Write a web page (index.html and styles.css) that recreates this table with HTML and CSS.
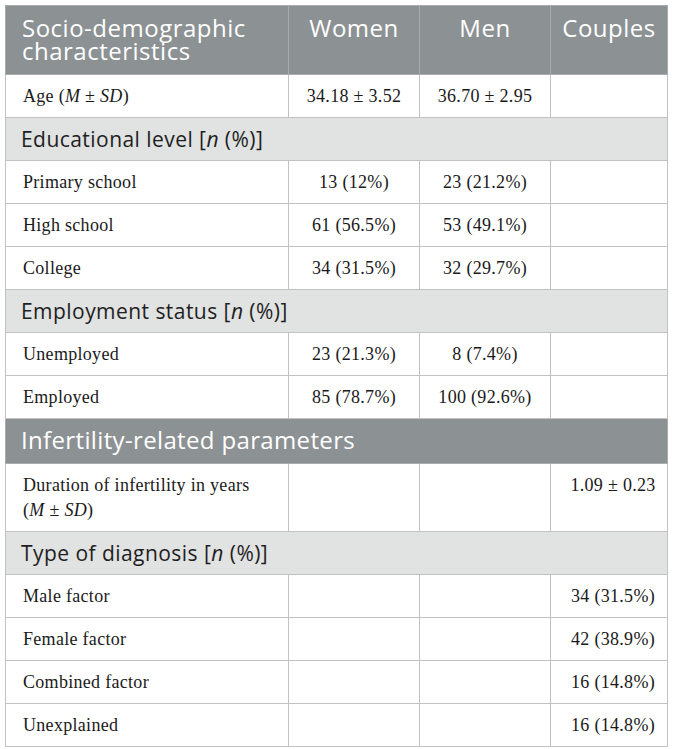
FILE: index.html
```html
<!DOCTYPE html>
<html>
<head>
<meta charset="utf-8">
<link rel="stylesheet" href="styles.css">
</head>
<body>
<div class="wrap">
<table class="tbl">
  <colgroup>
    <col class="c1"><col class="c2"><col class="c3"><col class="c4">
  </colgroup>
  <thead>
    <tr class="head">
      <th class="lab">Socio-demographic characteristics</th>
      <th>Women</th>
      <th>Men</th>
      <th>Couples</th>
    </tr>
  </thead>
  <tbody>
    <tr class="row">
      <td class="lab">Age (<i>M</i> ± <i>SD</i>)</td>
      <td>34.18 ± 3.52</td>
      <td>36.70 ± 2.95</td>
      <td></td>
    </tr>
    <tr class="sec"><td colspan="4">Educational level [<i>n</i> (%)]</td></tr>
    <tr class="row"><td class="lab">Primary school</td><td>13 (12%)</td><td>23 (21.2%)</td><td></td></tr>
    <tr class="row"><td class="lab">High school</td><td>61 (56.5%)</td><td>53 (49.1%)</td><td></td></tr>
    <tr class="row"><td class="lab">College</td><td>34 (31.5%)</td><td>32 (29.7%)</td><td></td></tr>
    <tr class="sec"><td colspan="4">Employment status [<i>n</i> (%)]</td></tr>
    <tr class="row"><td class="lab">Unemployed</td><td>23 (21.3%)</td><td>8 (7.4%)</td><td></td></tr>
    <tr class="row"><td class="lab">Employed</td><td>85 (78.7%)</td><td>100 (92.6%)</td><td></td></tr>
    <tr class="dark"><td colspan="4">Infertility-related parameters</td></tr>
    <tr class="row top">
      <td class="lab">Duration of infertility in years<br>(<i>M</i> ± <i>SD</i>)</td>
      <td></td><td></td>
      <td class="cp">1.09 ± 0.23</td>
    </tr>
    <tr class="sec"><td colspan="4">Type of diagnosis [<i>n</i> (%)]</td></tr>
    <tr class="row"><td class="lab">Male factor</td><td></td><td></td><td class="cp">34 (31.5%)</td></tr>
    <tr class="row"><td class="lab">Female factor</td><td></td><td></td><td class="cp">42 (38.9%)</td></tr>
    <tr class="row"><td class="lab">Combined factor</td><td></td><td></td><td class="cp">16 (14.8%)</td></tr>
    <tr class="row"><td class="lab">Unexplained</td><td></td><td></td><td class="cp">16 (14.8%)</td></tr>
  </tbody>
</table>
</div>
</body>
</html>
```

FILE: styles.css
```css
html, body {
  margin: 0;
  padding: 0;
  background: #ffffff;
}
.wrap {
  padding: 5px 0 0 5px;
}
.tbl {
  border-collapse: collapse;
  table-layout: fixed;
  width: 662px;
  border: 1px solid #bcbcbc;
}
.c1 { width: 283px; }
.c2 { width: 131px; }
.c3 { width: 131px; }
.c4 { width: 117px; }

.tbl th, .tbl td {
  border: 1px solid #c2c2c2;
}

.head th {
  background: #8c9193;
  color: #ffffff;
  font-family: "Open Sans", sans-serif;
  font-weight: 400;
  font-size: 24px;
  letter-spacing: 0.5px;
  line-height: 23px;
  padding: 10px 4px 12px 4px;
  text-align: center;
  vertical-align: top;
  border-color: #a9acae;
}
.head th.lab {
  text-align: left;
  padding-left: 16px;
}

.row td {
  font-family: "Liberation Serif", serif;
  font-size: 18px;
  letter-spacing: 0.3px;
  line-height: 25px;
  color: #1a1a1a;
  padding: 9px 4px 8px 4px;
  text-align: center;
  vertical-align: middle;
}
.row td.lab {
  text-align: left;
  padding-left: 17px;
}
.row.top td {
  vertical-align: top;
}
.row td.cp {
  padding-left: 12px;
}

.sec td {
  background: #e1e2e2;
  font-family: "Open Sans", sans-serif;
  font-size: 21px;
  letter-spacing: 0.45px;
  line-height: 26px;
  color: #1e1e1e;
  padding: 8px 8px 8px 15px;
}
.dark td {
  background: #8c9193;
  color: #ffffff;
  font-family: "Open Sans", sans-serif;
  font-size: 24px;
  letter-spacing: 0.35px;
  line-height: 28px;
  padding: 7px 8px 9px 15px;
  border-color: #a9acae;
}
```
